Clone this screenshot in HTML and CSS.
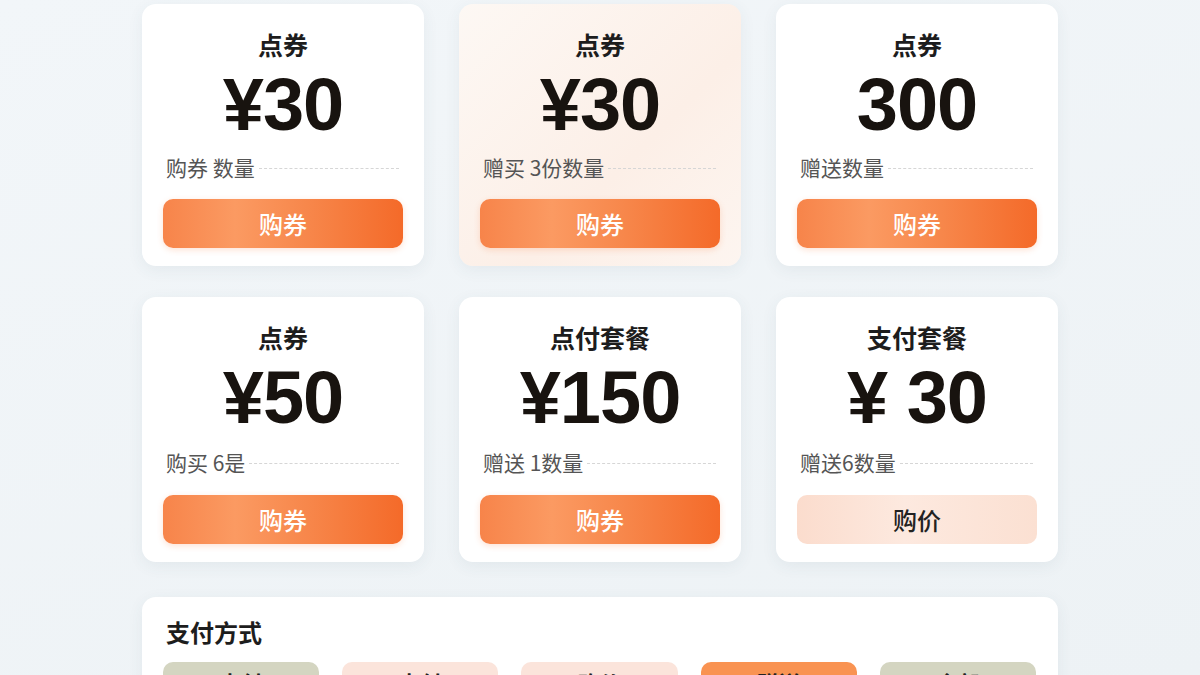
FILE: index.html
```html
<!DOCTYPE html>
<html lang="zh">
<head>
  <meta charset="UTF-8" />
  <meta name="viewport" content="width=device-width, initial-scale=1" />
  <title>点券购买</title>
  <link rel="stylesheet" href="styles.css">
</head>
<body>
  <main class="shop">
    <div class="packs">
      <div class="card">
        <h3>点券</h3>
        <div class="price">¥30</div>
        <p class="label">购券 数量</p>
        <button class="buy">购券</button>
      </div>
      <div class="card card-warm">
        <h3>点券</h3>
        <div class="price">¥30</div>
        <p class="label">赠买 3份数量</p>
        <button class="buy">购券</button>
      </div>
      <div class="card">
        <h3>点券</h3>
        <div class="price">300</div>
        <p class="label">赠送数量</p>
        <button class="buy">购券</button>
      </div>
      <div class="card card-low">
        <h3>点券</h3>
        <div class="price">¥50</div>
        <p class="label">购买 6是</p>
        <button class="buy">购券</button>
      </div>
      <div class="card card-low">
        <h3>点付套餐</h3>
        <div class="price">¥150</div>
        <p class="label">赠送 1数量</p>
        <button class="buy">购券</button>
      </div>
      <div class="card card-low">
        <h3>支付套餐</h3>
        <div class="price">¥ 30</div>
        <p class="label">赠送6数量</p>
        <button class="buy buy-soft">购价</button>
      </div>
    </div>

    <section class="pay">
      <h2>支付方式</h2>
      <div class="methods">
        <button class="method grey">支付</button>
        <button class="method peach">支付</button>
        <button class="method peach">购价</button>
        <button class="method orange">赠送</button>
        <button class="method grey">全部</button>
      </div>
    </section>
  </main>
</body>
</html>
```

FILE: styles.css
```css
body {
  margin: 0;
  font-family: "Noto Sans CJK SC", "Noto Sans", sans-serif;
  background: linear-gradient(160deg, #f2f6f9, #edf2f5);
  color: #1d1d1d;
  height: 675px;
  overflow: hidden;
}

.shop {
  width: 916px;
  margin: 0 auto;
  padding-top: 4px;
}

.packs {
  display: grid;
  grid-template-columns: repeat(3, 1fr);
  column-gap: 35px;
  row-gap: 31px;
}

.card {
  background: #fff;
  border-radius: 14px;
  padding: 24px 21px 18px;
  box-shadow: 0 4px 16px rgba(60, 80, 100, 0.07);
  text-align: center;
}

.card-warm {
  background: linear-gradient(135deg, #fdf8f4, #fcefe7 60%, #fdf5f0);
}

.card h3 {
  margin: 0;
  font-size: 25px;
  line-height: 32px;
  font-weight: 700;
}

.price {
  margin-top: 5px;
  font-family: "Liberation Sans", Arial, sans-serif;
  font-weight: 700;
  font-size: 74px;
  line-height: 80px;
  letter-spacing: -1px;
  color: #18130f;
}

.label {
  display: flex;
  align-items: center;
  margin: 8px 0 0;
  padding-left: 3px;
  font-size: 21px;
  line-height: 28px;
  color: #555;
  text-align: left;
  white-space: pre;
}

.card-low .label {
  margin-top: 10px;
}

.label::after {
  content: "";
  flex: 1;
  margin: 2px 4px 0 4px;
  border-top: 1px dashed #d6d6d6;
}

.buy {
  display: block;
  width: 100%;
  height: 49px;
  margin-top: 18px;
  border: none;
  border-radius: 10px;
  background: linear-gradient(90deg, #f7844a, #fb9a62 30%, #f7874b 60%, #f46a29);
  color: #fff;
  font-family: inherit;
  font-size: 24px;
  font-weight: 500;
  box-shadow: 0 2px 6px rgba(245, 110, 45, 0.2);
  cursor: pointer;
}

.card-low .buy {
  margin-top: 19px;
}

.buy-soft {
  background: linear-gradient(90deg, #fbdccd, #fde9df 45%, #fbe0d2);
  color: #222;
  box-shadow: none;
}

.pay {
  margin-top: 35px;
  background: #fff;
  border-radius: 14px;
  padding: 19px 22px 20px 21px;
  box-shadow: 0 4px 16px rgba(60, 80, 100, 0.07);
}

.pay h2 {
  margin: 0 0 14px 3px;
  font-size: 24px;
  line-height: 32px;
  font-weight: 700;
}

.methods {
  display: grid;
  grid-template-columns: repeat(5, 1fr);
  gap: 23px;
}

.method {
  height: 40px;
  border: none;
  border-radius: 10px;
  font-family: inherit;
  font-size: 22px;
  font-weight: 700;
  color: #222;
}

.grey {
  background: #d4d5c1;
}

.peach {
  background: #fbe4db;
}

.orange {
  background: #f99352;
}
```
